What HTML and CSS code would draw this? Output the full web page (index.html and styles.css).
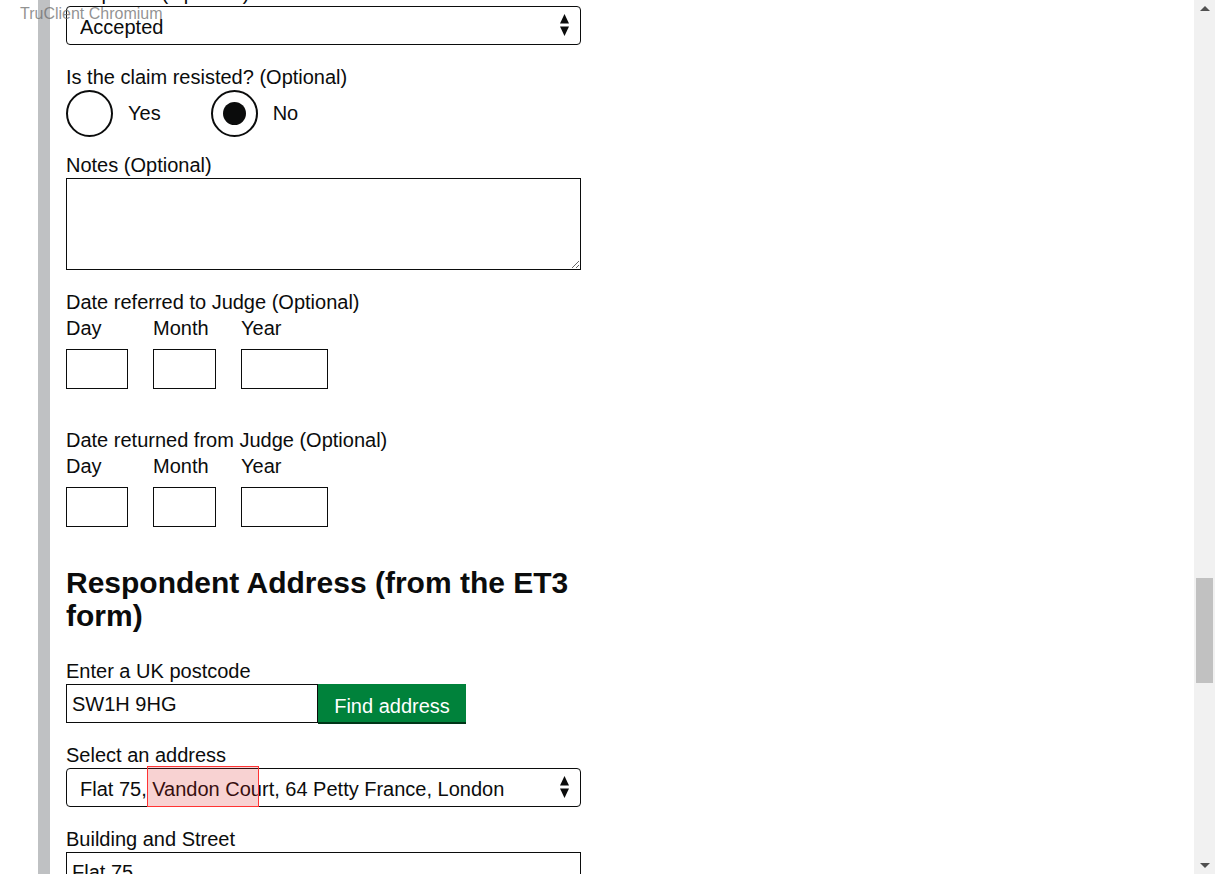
FILE: index.html
```html
<!DOCTYPE html>
<html lang="en">
<head>
<meta charset="utf-8">
<title>Respondent details</title>
<link rel="stylesheet" href="styles.css">
</head>
<body>
<div class="rail">
  <form class="form">
    <div class="group">
      <label class="label" for="response">Response (Optional)</label>
      <div class="select-wrap">
        <select id="response" class="select"><option>Accepted</option></select>
        <svg class="select-arrows" width="9" height="22" viewBox="0 0 9 22"><polygon points="0,9.5 4.5,0 9,9.5" fill="#0b0c0c"/><polygon points="0,12.5 9,12.5 4.5,22" fill="#0b0c0c"/></svg>
      </div>
    </div>

    <div class="group group-radios">
      <div class="label">Is the claim resisted? (Optional)</div>
      <div class="radios">
        <div class="radio"><span class="radio-circle"></span><span class="radio-text">Yes</span></div>
        <div class="radio"><span class="radio-circle checked"></span><span class="radio-text">No</span></div>
      </div>
    </div>

    <div class="group">
      <label class="label" for="notes">Notes (Optional)</label>
      <textarea id="notes" class="textarea"></textarea>
    </div>

    <div class="group group-date">
      <div class="label label-legend">Date referred to Judge (Optional)</div>
      <div class="date">
        <div class="date-item"><span class="date-label">Day</span><input class="date-input w-day" type="text"></div>
        <div class="date-item"><span class="date-label">Month</span><input class="date-input w-month" type="text"></div>
        <div class="date-item"><span class="date-label">Year</span><input class="date-input w-year" type="text"></div>
      </div>
    </div>

    <div class="group group-date">
      <div class="label label-legend">Date returned from Judge (Optional)</div>
      <div class="date">
        <div class="date-item"><span class="date-label">Day</span><input class="date-input w-day" type="text"></div>
        <div class="date-item"><span class="date-label">Month</span><input class="date-input w-month" type="text"></div>
        <div class="date-item"><span class="date-label">Year</span><input class="date-input w-year" type="text"></div>
      </div>
    </div>

    <h2 class="heading">Respondent Address (from the ET3 form)</h2>

    <div class="group">
      <label class="label" for="postcode">Enter a UK postcode</label>
      <div class="postcode-row">
        <input id="postcode" class="postcode" type="text" value="SW1H 9HG">
        <button type="button" class="button">Find address</button>
      </div>
    </div>

    <div class="group">
      <label class="label" for="address">Select an address</label>
      <div class="select-wrap">
        <select id="address" class="select"><option>Flat 75, Vandon Court, 64 Petty France, London</option></select>
        <svg class="select-arrows" width="9" height="22" viewBox="0 0 9 22"><polygon points="0,9.5 4.5,0 9,9.5" fill="#0b0c0c"/><polygon points="0,12.5 9,12.5 4.5,22" fill="#0b0c0c"/></svg>
        <span class="highlight"></span>
      </div>
    </div>

    <div class="group">
      <label class="label" for="street">Building and Street</label>
      <input id="street" class="text-input" type="text" value="Flat 75">
    </div>
  </form>
</div>

<div class="brand">TruClient Chromium</div>

<div class="scrollbar">
  <span class="sb-arrow sb-up"></span>
  <span class="sb-thumb"></span>
  <span class="sb-arrow sb-down"></span>
</div>
</body>
</html>
```

FILE: styles.css
```css
html, body {
  margin: 0;
  padding: 0;
  height: 874px;
  overflow: hidden;
  background: #fff;
}

body {
  font-family: "Liberation Sans", Arial, sans-serif;
  font-size: 20px;
  color: #0b0c0c;
}

.rail {
  margin-left: 38px;
  border-left: 12px solid #bfc1c3;
  padding-left: 16px;
  height: 874px;
  box-sizing: border-box;
  overflow: hidden;
}

.form {
  width: 515px;
  margin-top: -20px;
}

.group {
  margin-bottom: 19px;
}

.label {
  display: block;
  line-height: 25px;
  padding-top: 1px;
  margin-bottom: 0;
}

.select-wrap {
  position: relative;
}

.select {
  display: block;
  width: 515px;
  height: 39px;
  box-sizing: border-box;
  margin: 0;
  border: 1px solid #0b0c0c;
  border-radius: 4px;
  padding: 2px 30px 0 13px;
  background: #fff;
  color: #0b0c0c;
  font-family: inherit;
  font-size: 20px;
  -webkit-appearance: none;
  appearance: none;
}

.select-arrows {
  position: absolute;
  right: 12px;
  top: 8px;
}

.highlight {
  position: absolute;
  left: 81px;
  top: -2px;
  width: 110px;
  height: 39px;
  border: 1px solid #f33;
  background: rgba(220, 30, 30, 0.2);
}

/* radios */
.group-radios {
  margin-bottom: 15px;
}

.radios {
  display: flex;
  align-items: center;
  height: 47px;
}

.radio {
  display: flex;
  align-items: center;
  margin-right: 50px;
}

.radio-circle {
  width: 47px;
  height: 47px;
  box-sizing: border-box;
  border: 2px solid #0b0c0c;
  border-radius: 50%;
  position: relative;
  background: #fff;
}

.radio-circle.checked::after {
  content: "";
  position: absolute;
  left: 10px;
  top: 10px;
  width: 23px;
  height: 23px;
  border-radius: 50%;
  background: #0b0c0c;
}

.radio-text {
  margin-left: 15px;
  line-height: 25px;
  padding-bottom: 1px;
}

/* textarea */
.textarea {
  display: block;
  width: 515px;
  height: 92px;
  box-sizing: border-box;
  margin: 0;
  border: 1px solid #0b0c0c;
  font-family: inherit;
  font-size: 20px;
}

/* date */
.group-date {
  margin-bottom: 38px;
}

.date {
  display: flex;
  gap: 25px;
}

.date-item {
  display: flex;
  flex-direction: column;
}

.date-label {
  line-height: 25px;
  padding-top: 1px;
  margin-bottom: 8px;
}

.date-input {
  height: 40px;
  box-sizing: border-box;
  margin: 0;
  border: 1px solid #0b0c0c;
  padding: 0 5px;
  font-family: inherit;
  font-size: 20px;
}

.w-day { width: 62px; }
.w-month { width: 63px; }
.w-year { width: 87px; }

/* heading */
.heading {
  margin: 0 0 26px;
  padding-top: 1px;
  font-size: 30px;
  line-height: 33px;
  font-weight: 700;
}

/* postcode */
.postcode-row {
  display: flex;
  align-items: flex-start;
}

.postcode {
  width: 252px;
  height: 39px;
  box-sizing: border-box;
  margin: 0;
  border: 1px solid #0b0c0c;
  padding: 2px 5px 0;
  font-family: inherit;
  font-size: 20px;
  color: #0b0c0c;
}

.button {
  width: 148px;
  height: 38px;
  margin: 0;
  border: 0;
  padding: 6px 0 0;
  background: #00823b;
  box-shadow: 0 2px 0 #003618;
  color: #fff;
  font-family: inherit;
  font-size: 20px;
}

.text-input {
  display: block;
  width: 515px;
  height: 39px;
  box-sizing: border-box;
  margin: 0;
  border: 1px solid #0b0c0c;
  padding: 2px 5px 0;
  font-family: inherit;
  font-size: 20px;
  color: #0b0c0c;
}

/* overlay brand */
.brand {
  position: absolute;
  left: 20px;
  top: 4px;
  font-size: 16px;
  line-height: 20px;
  color: rgba(110, 110, 110, 0.75);
}

/* fake scrollbar */
.scrollbar {
  position: fixed;
  top: 0;
  right: 0;
  width: 21px;
  height: 874px;
  background: #f1f1f1;
}

.sb-thumb {
  position: absolute;
  left: 2px;
  right: 2px;
  top: 578px;
  height: 105px;
  background: #c1c1c1;
}

.sb-arrow {
  position: absolute;
  left: 6px;
  width: 0;
  height: 0;
  border-left: 5px solid transparent;
  border-right: 5px solid transparent;
}

.sb-up {
  top: 6px;
  border-bottom: 5px solid #505050;
}

.sb-down {
  bottom: 6px;
  border-top: 5px solid #505050;
}
```
